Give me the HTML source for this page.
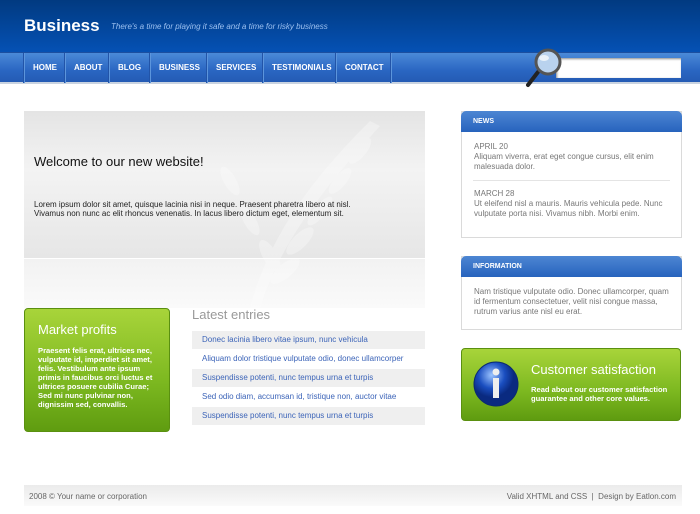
<!DOCTYPE html>
<html><head><meta charset="utf-8"><style>
*{margin:0;padding:0;box-sizing:border-box}
body{width:700px;height:514px;background:#fff;font-family:"Liberation Sans",sans-serif;position:relative;overflow:hidden}
.abs{position:absolute}
#hd{left:0;top:0;width:700px;height:52px;background:linear-gradient(#013a80,#0551b4)}
#nav{left:0;top:52px;width:700px;height:32px;background:linear-gradient(#4b8ad8,#2a66c2 60%,#245bb4);border-top:1px solid #1c4fa0;border-bottom:2px solid #c9d3e0}
#nav span{position:absolute;top:0;height:30px;line-height:30px;color:#fff;font-size:8px;font-weight:bold;border-left:1px solid #2254a8;box-shadow:inset 1px 0 #5c95dc;padding-left:9px}
.row{position:absolute;left:192px;width:233px;height:18px;line-height:18px;padding-left:10px;font-size:8px;color:#3c64b8}
.box{position:absolute;border:1px solid #dadada;background:#fff}
.bh{height:21px;background:linear-gradient(#4d86d3,#2763bd);border-radius:5px 5px 0 0;color:#fff;font-size:7px;font-weight:bold;line-height:21px;padding-left:12px;margin:-1px -1px 0}
.bt{font-size:8px;color:#777;line-height:10px;padding:0 12px}
</style></head><body>
<div id="hd" class="abs"></div>
<div class="abs" style="left:24px;top:16px;color:#fff;font-size:17px;font-weight:bold">Business</div>
<div class="abs" style="left:111px;top:22px;color:#9cc0f0;font-size:8px;font-style:italic">There's a time for playing it safe and a time for risky business</div>
<div id="nav" class="abs">
<span style="left:23px;width:41px">HOME</span><span style="left:64px;width:44px">ABOUT</span><span style="left:108px;width:41px">BLOG</span><span style="left:149px;width:57px">BUSINESS</span><span style="left:206px;width:56px">SERVICES</span><span style="left:262px;width:73px">TESTIMONIALS</span><span style="left:335px;width:55px">CONTACT</span><span style="left:390px;width:1px"></span>
</div>
<div class="abs" style="left:556px;top:58px;width:125px;height:20px;background:#fff;box-shadow:inset 1px 1px 2px #888"></div>
<svg class="abs" style="left:524px;top:46px" width="42" height="44"><line x1="14" y1="26" x2="4" y2="39" stroke="#222" stroke-width="4" stroke-linecap="round"/><circle cx="24" cy="16" r="12" fill="#b9d2ee" stroke="#555" stroke-width="3"/><ellipse cx="20" cy="12" rx="5" ry="3" fill="#fff" opacity=".7"/></svg>

<div class="abs" style="left:24px;top:111px;width:401px;height:147px;background:linear-gradient(#e4e4e4,#f3f3f3 40%,#e6e6e6)"></div>
<div class="abs" style="left:24px;top:258px;width:401px;height:50px;background:linear-gradient(#f2f2f2,#fafafa);border-top:1px solid #fff"></div>
<svg class="abs" style="left:170px;top:111px" width="255" height="197" opacity=".3"><g fill="#fff"><path d="M200 10 C150 60 100 120 80 197 L90 197 C110 130 160 70 210 15Z"/><ellipse cx="190" cy="40" rx="6" ry="16" transform="rotate(40 190 40)"/><ellipse cx="170" cy="70" rx="6" ry="16" transform="rotate(40 170 70)"/><ellipse cx="150" cy="100" rx="6" ry="18" transform="rotate(40 150 100)"/><ellipse cx="130" cy="130" rx="7" ry="18" transform="rotate(45 130 130)"/><ellipse cx="115" cy="160" rx="7" ry="18" transform="rotate(50 115 160)"/><ellipse cx="60" cy="70" rx="6" ry="16" transform="rotate(-30 60 70)"/><ellipse cx="80" cy="110" rx="6" ry="16" transform="rotate(-30 80 110)"/><ellipse cx="100" cy="145" rx="7" ry="18" transform="rotate(-30 100 145)"/></g></svg>
<div class="abs" style="left:34px;top:154px;font-size:13px;color:#111">Welcome to our new website!</div>
<div class="abs" style="left:34px;top:200px;font-size:8px;line-height:9px;color:#222">Lorem ipsum dolor sit amet, quisque lacinia nisi in neque. Praesent pharetra libero at nisl.<br>Vivamus non nunc ac elit rhoncus venenatis. In lacus libero dictum eget, elementum sit.</div>

<div class="abs" style="left:24px;top:308px;width:146px;height:124px;border-radius:4px;background:linear-gradient(#a8d43a,#7cb820 60%,#5f9c10);border:1px solid #5a9010"></div>
<div class="abs" style="left:38px;top:322px;font-size:13px;color:#fff">Market profits</div>
<div class="abs" style="left:38px;top:346px;width:125px;font-size:7.6px;line-height:9px;color:#fff;font-weight:bold">Praesent felis erat, ultrices nec, vulputate id, imperdiet sit amet, felis. Vestibulum ante ipsum primis in faucibus orci luctus et ultrices posuere cubilia Curae; Sed mi nunc pulvinar non, dignissim sed, convallis.</div>

<div class="abs" style="left:192px;top:307px;font-size:13px;color:#999">Latest entries</div>
<div class="row" style="top:331px;background:#efefef">Donec lacinia libero vitae ipsum, nunc vehicula</div>
<div class="row" style="top:350px">Aliquam dolor tristique vulputate odio, donec ullamcorper</div>
<div class="row" style="top:369px;background:#efefef">Suspendisse potenti, nunc tempus urna et turpis</div>
<div class="row" style="top:388px">Sed odio diam, accumsan id, tristique non, auctor vitae</div>
<div class="row" style="top:407px;background:#efefef">Suspendisse potenti, nunc tempus urna et turpis</div>

<div class="box" style="left:461px;top:111px;width:221px;height:127px"><div class="bh">NEWS</div>
<div class="bt" style="margin-top:10px">APRIL 20<br>Aliquam viverra, erat eget congue cursus, elit enim malesuada dolor.</div>
<div style="margin:8px 11px;border-top:1px solid #e4e4e4"></div>
<div class="bt">MARCH 28<br>Ut eleifend nisl a mauris. Mauris vehicula pede. Nunc vulputate porta nisi. Vivamus nibh. Morbi enim.</div></div>
<div class="box" style="left:461px;top:256px;width:221px;height:74px"><div class="bh">INFORMATION</div>
<div class="bt" style="margin-top:10px">Nam tristique vulputate odio. Donec ullamcorper, quam id fermentum consectetuer, velit nisi congue massa, rutrum varius ante nisl eu erat.</div></div>

<div class="abs" style="left:461px;top:348px;width:220px;height:73px;border-radius:4px;background:linear-gradient(#a8d43a,#7cb820 60%,#5f9c10);border:1px solid #5a9010"></div>
<svg class="abs" style="left:472px;top:360px" width="50" height="50"><defs><radialGradient id="g" cx=".4" cy=".3"><stop offset="0" stop-color="#9cc4ff"/><stop offset=".6" stop-color="#1a4ec0"/><stop offset="1" stop-color="#0a2a80"/></radialGradient></defs><circle cx="24" cy="24" r="22" fill="url(#g)" stroke="#0a2a70"/><circle cx="24" cy="12" r="3.5" fill="#eee"/><rect x="21" y="18" width="6" height="20" fill="#eee"/></svg>
<div class="abs" style="left:531px;top:362px;font-size:13px;color:#fff">Customer satisfaction</div>
<div class="abs" style="left:531px;top:385px;font-size:7.6px;line-height:9px;color:#fff;font-weight:bold">Read about our customer satisfaction<br>guarantee and other core values.</div>

<div class="abs" style="left:24px;top:485px;width:658px;height:21px;background:linear-gradient(#ebebeb,#fafafa)"></div>
<div class="abs" style="left:29px;top:492px;font-size:8px;color:#666">2008 © Your name or corporation</div>
<div class="abs" style="right:24px;top:492px;font-size:8px;color:#666">Valid XHTML and CSS &nbsp;|&nbsp; Design by Eatlon.com</div>
</body></html>
